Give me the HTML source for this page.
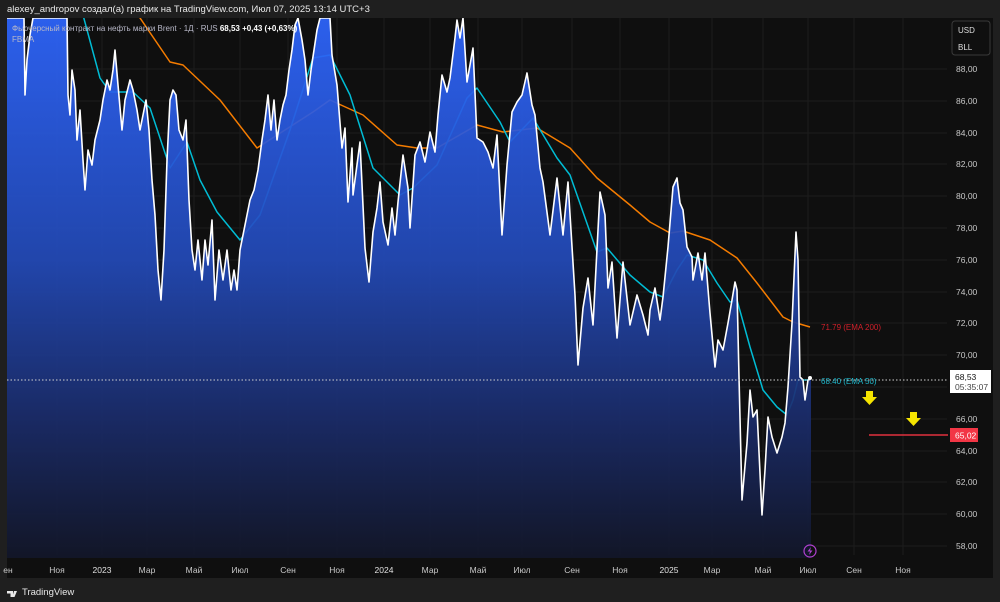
<!DOCTYPE html>
<html><head><meta charset="utf-8"><style>
html,body{margin:0;padding:0;background:#1f1f1f;width:1000px;height:602px;overflow:hidden;font-family:"Liberation Sans",sans-serif}
</style></head><body>
<svg width="1000" height="602" viewBox="0 0 1000 602" xmlns="http://www.w3.org/2000/svg" style="position:absolute;left:0;top:0">
<defs>
<linearGradient id="g" x1="0" y1="18" x2="0" y2="560" gradientUnits="userSpaceOnUse">
<stop offset="0" stop-color="#2e66ff"/>
<stop offset="0.45" stop-color="#234ab8"/>
<stop offset="0.75" stop-color="#1a2b68"/>
<stop offset="1" stop-color="#121628"/>
</linearGradient>
<clipPath id="c"><rect x="7" y="18" width="940" height="540"/></clipPath>
</defs>
<rect x="0" y="0" width="1000" height="602" fill="#1f1f1f"/>
<rect x="7" y="18" width="986" height="560" fill="#0f0f0f"/>
<g stroke="#1c1c1c" stroke-width="1">
<line x1="7" x2="947" y1="69" y2="69"/><line x1="7" x2="947" y1="101" y2="101"/><line x1="7" x2="947" y1="133" y2="133"/><line x1="7" x2="947" y1="164" y2="164"/><line x1="7" x2="947" y1="196" y2="196"/><line x1="7" x2="947" y1="228" y2="228"/><line x1="7" x2="947" y1="260" y2="260"/><line x1="7" x2="947" y1="292" y2="292"/><line x1="7" x2="947" y1="323" y2="323"/><line x1="7" x2="947" y1="355" y2="355"/><line x1="7" x2="947" y1="387" y2="387"/><line x1="7" x2="947" y1="419" y2="419"/><line x1="7" x2="947" y1="451" y2="451"/><line x1="7" x2="947" y1="482" y2="482"/><line x1="7" x2="947" y1="514" y2="514"/><line x1="7" x2="947" y1="546" y2="546"/>
<line y1="18" y2="555" x1="57" x2="57"/><line y1="18" y2="555" x1="102" x2="102"/><line y1="18" y2="555" x1="147" x2="147"/><line y1="18" y2="555" x1="194" x2="194"/><line y1="18" y2="555" x1="240" x2="240"/><line y1="18" y2="555" x1="288" x2="288"/><line y1="18" y2="555" x1="337" x2="337"/><line y1="18" y2="555" x1="384" x2="384"/><line y1="18" y2="555" x1="430" x2="430"/><line y1="18" y2="555" x1="478" x2="478"/><line y1="18" y2="555" x1="522" x2="522"/><line y1="18" y2="555" x1="572" x2="572"/><line y1="18" y2="555" x1="620" x2="620"/><line y1="18" y2="555" x1="669" x2="669"/><line y1="18" y2="555" x1="712" x2="712"/><line y1="18" y2="555" x1="763" x2="763"/><line y1="18" y2="555" x1="808" x2="808"/><line y1="18" y2="555" x1="854" x2="854"/><line y1="18" y2="555" x1="903" x2="903"/>
</g>
<g clip-path="url(#c)" fill="none" stroke-width="1.5" stroke-linejoin="round">
<polyline stroke="#f57c00" points="138,15 170,62 183,65 220,100 257,148 313,112 330,100 363,115 397,145 417,148 437,148 477,125 503,132 537,128 570,148 597,178 630,205 650,222 670,233 683,231 710,240 737,258 757,283 783,317 793,322 810,327"/>
<polyline stroke="#00bcd4" points="70,10 83,15 100,78 110,92 133,92 150,108 170,168 187,142 200,180 217,212 240,240 260,215 290,130 313,58 330,55 350,95 373,168 400,195 413,188 437,165 467,98 477,88 500,122 510,142 533,118 557,158 570,175 597,252 607,248 630,275 650,292 663,297 677,270 687,255 703,260 717,283 730,302 737,300 750,347 763,390 777,407 787,415 793,400 798,380 810,380"/>
<polygon fill="url(#g)" fill-opacity="0.92" stroke="none" points="7,560 7,18 24,18 25,95 27,60 30,35 33,18 67,18 68,95 70,115 72,70 75,90 77,140 80,110 83,160 85,190 88,150 92,165 95,140 100,120 103,100 107,80 110,90 113,70 115,50 118,85 122,130 125,100 130,80 133,90 137,110 140,130 143,115 146,100 149,130 152,180 155,215 158,270 161,300 164,250 167,160 170,100 173,90 176,95 179,130 183,140 186,120 189,200 192,250 195,270 198,240 202,280 205,240 208,265 212,220 215,300 219,250 223,280 227,250 231,290 234,270 237,290 240,250 243,235 247,215 250,200 254,190 258,170 262,140 265,120 268,95 271,130 274,100 277,140 280,120 283,105 286,95 289,70 292,50 295,25 298,18 302,40 305,60 308,95 311,70 314,50 317,30 320,18 330,18 332,55 337,85 342,148 345,128 348,202 352,148 353,195 360,142 365,248 369,282 373,232 377,208 380,182 383,222 388,245 392,208 395,235 398,202 403,155 408,188 410,228 415,155 420,142 425,162 430,132 435,152 438,115 442,75 447,92 450,78 455,38 457,20 460,38 463,18 467,82 473,48 477,138 483,142 488,152 493,168 497,135 502,235 507,165 512,112 517,102 522,95 527,73 532,105 535,115 540,168 543,182 550,235 557,178 563,235 568,182 575,295 578,365 583,308 588,278 593,325 600,192 605,215 608,288 612,262 617,338 623,262 630,325 637,295 643,315 648,335 650,310 655,288 660,320 663,297 668,247 673,187 677,178 680,203 683,210 687,247 692,257 693,280 698,253 702,280 705,253 710,313 715,367 718,340 723,350 728,323 732,300 735,282 737,290 739,377 742,500 747,443 750,390 753,417 757,410 762,515 765,470 768,417 772,437 777,453 782,437 785,423 788,387 792,323 796,232 798,260 800,377 803,380 805,400 808,380 811,378 811,560"/>
<polyline stroke="#ffffff" stroke-width="1.6" points="7,18 24,18 25,95 27,60 30,35 33,18 67,18 68,95 70,115 72,70 75,90 77,140 80,110 83,160 85,190 88,150 92,165 95,140 100,120 103,100 107,80 110,90 113,70 115,50 118,85 122,130 125,100 130,80 133,90 137,110 140,130 143,115 146,100 149,130 152,180 155,215 158,270 161,300 164,250 167,160 170,100 173,90 176,95 179,130 183,140 186,120 189,200 192,250 195,270 198,240 202,280 205,240 208,265 212,220 215,300 219,250 223,280 227,250 231,290 234,270 237,290 240,250 243,235 247,215 250,200 254,190 258,170 262,140 265,120 268,95 271,130 274,100 277,140 280,120 283,105 286,95 289,70 292,50 295,25 298,18 302,40 305,60 308,95 311,70 314,50 317,30 320,18 330,18 332,55 337,85 342,148 345,128 348,202 352,148 353,195 360,142 365,248 369,282 373,232 377,208 380,182 383,222 388,245 392,208 395,235 398,202 403,155 408,188 410,228 415,155 420,142 425,162 430,132 435,152 438,115 442,75 447,92 450,78 455,38 457,20 460,38 463,18 467,82 473,48 477,138 483,142 488,152 493,168 497,135 502,235 507,165 512,112 517,102 522,95 527,73 532,105 535,115 540,168 543,182 550,235 557,178 563,235 568,182 575,295 578,365 583,308 588,278 593,325 600,192 605,215 608,288 612,262 617,338 623,262 630,325 637,295 643,315 648,335 650,310 655,288 660,320 663,297 668,247 673,187 677,178 680,203 683,210 687,247 692,257 693,280 698,253 702,280 705,253 710,313 715,367 718,340 723,350 728,323 732,300 735,282 737,290 739,377 742,500 747,443 750,390 753,417 757,410 762,515 765,470 768,417 772,437 777,453 782,437 785,423 788,387 792,323 796,232 798,260 800,377 803,380 805,400 808,380 811,378"/>
</g>
<line x1="7" x2="948" y1="380" y2="380" stroke="#cfcfcf" stroke-width="1" stroke-dasharray="1.5,2"/>
<circle cx="810" cy="378" r="2" fill="#fff"/>
<line x1="869" x2="948" y1="435" y2="435" stroke="#e0313f" stroke-width="1.5"/>
<text x="821" y="330" font-size="8" fill="#d0202a">71.79 (EMA 200)</text>
<text x="821" y="384" font-size="8" fill="#1fb8cc">68.40 (EMA 50)</text>
<polygon fill="#f5e400" points="866,391 873,391 873,397 877,397 869.5,405 862,397 866,397"/>
<polygon fill="#f5e400" points="910,412 917,412 917,418 921,418 913.5,426 906,418 910,418"/>
<g font-size="8.5" fill="#c8c8c8">
<text x="956" y="72">88,00</text><text x="956" y="104">86,00</text><text x="956" y="136">84,00</text><text x="956" y="167">82,00</text><text x="956" y="199">80,00</text><text x="956" y="231">78,00</text><text x="956" y="263">76,00</text><text x="956" y="295">74,00</text><text x="956" y="326">72,00</text><text x="956" y="358">70,00</text><text x="956" y="422">66,00</text><text x="956" y="454">64,00</text><text x="956" y="485">62,00</text><text x="956" y="517">60,00</text><text x="956" y="549">58,00</text>
</g>
<rect x="950" y="370" width="41" height="23" fill="#fff"/>
<text x="955" y="380" font-size="8.5" fill="#111">68,53</text>
<text x="955" y="390" font-size="8.5" fill="#444">05:35:07</text>
<rect x="950" y="428" width="28" height="14" fill="#f23645"/>
<text x="955" y="438.5" font-size="8.5" fill="#fff">65,02</text>
<rect x="952" y="21" width="38" height="34" rx="3" fill="#0f0f0f" stroke="#3a3a3a"/>
<text x="958" y="33" font-size="8" fill="#ddd">USD</text>
<text x="958" y="50" font-size="8" fill="#ddd">BLL</text>
<g font-size="8.5" fill="#c8c8c8" text-anchor="middle">
<text x="8" y="573">ен</text><text x="57" y="573">Ноя</text><text x="102" y="573" fill="#e0e0e0">2023</text><text x="147" y="573">Мар</text><text x="194" y="573">Май</text><text x="240" y="573">Июл</text><text x="288" y="573">Сен</text><text x="337" y="573">Ноя</text><text x="384" y="573" fill="#e0e0e0">2024</text><text x="430" y="573">Мар</text><text x="478" y="573">Май</text><text x="522" y="573">Июл</text><text x="572" y="573">Сен</text><text x="620" y="573">Ноя</text><text x="669" y="573" fill="#e0e0e0">2025</text><text x="712" y="573">Мар</text><text x="763" y="573">Май</text><text x="808" y="573">Июл</text><text x="854" y="573">Сен</text><text x="903" y="573">Ноя</text>
</g>
<circle cx="810" cy="551" r="6" fill="none" stroke="#b040d0" stroke-width="1.2"/>
<path d="M811,547 L807.5,551.5 L810,551.5 L809,555 L812.5,550.5 L810,550.5 Z" fill="#b040d0"/>
<text x="7" y="12" font-size="9.5" fill="#e8e8e8">alexey_andropov создал(а) график на TradingView.com, Июл 07, 2025 13:14 UTC+3</text>
<text x="12" y="31" font-size="8" fill="#b8b8c8">Фьючерсный контракт на нефть марки Brent · 1Д · RUS <tspan fill="#fff" font-weight="bold">68,53</tspan> <tspan fill="#fff" font-weight="bold">+0,43 (+0,63%)</tspan></text>
<text x="12" y="42" font-size="8" fill="#b8b8c8">FBMA</text>
<path d="M7,591 h6 v6 h-2.5 v-3.5 h-3.5 z M14,591 h3 l-2.5,6 h-2.2 z" fill="#e8e8e8"/>
<text x="22" y="595" font-size="9.5" fill="#e8e8e8">TradingView</text>
</svg>
</body></html>
